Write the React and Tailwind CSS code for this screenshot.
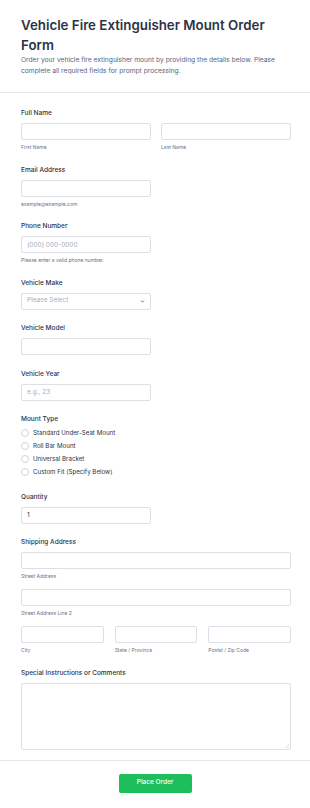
import React from "react";

const inputCls =
  "block h-[17px] w-full rounded-[2px] border border-[#dcdfe6] bg-white px-[5px] text-[6.5px] text-[#2c3345] placeholder:text-[#a6adbb] outline-none";

const Label = ({ children, className = "" }) => (
  <div className={`h-[10px] text-[6.5px] font-medium leading-[10px] text-[#2c3345] ${className}`}>
    {children}
  </div>
);

const Sub = ({ children }) => (
  <div className="mt-[3px] h-[8px] text-[5px] leading-[8px] text-[#6b7489]">{children}</div>
);

const Field = ({ label, sub, placeholder, value, narrow = true }) => (
  <div>
    <Label className="mb-[5px]">{label}</Label>
    <div className={narrow ? "w-[130px]" : "w-full"}>
      <input className={inputCls} placeholder={placeholder} defaultValue={value} />
    </div>
    {sub && <Sub>{sub}</Sub>}
  </div>
);

const Radio = ({ text }) => (
  <label className="flex h-[13px] items-center gap-[4px]">
    <span className="h-[8px] w-[8px] rounded-full border border-[#cfd3dc] bg-white" />
    <span className="text-[6.2px] text-[#2c3345]">{text}</span>
  </label>
);

export default function App() {
  return (
    <div className="min-h-[808px] w-[310px] bg-white font-['Inter',sans-serif]">
      <div className="border-b border-[#e6e7eb] pl-[21px] pr-[19px] pb-[15px] pt-[15px]">
        <h1 className="text-[13.3px] font-semibold leading-[20px] text-[#2c3345]">
          Vehicle Fire Extinguisher Mount Order Form
        </h1>
        <p className="text-[6.7px] leading-[11px] text-[#57647e]">
          Order your vehicle fire extinguisher mount by providing the details below. Please
          complete all required fields for prompt processing.
        </p>
      </div>

      <div className="flex flex-col gap-[13.5px] pl-[21px] pr-[19px] pt-[15px] pb-[10px]">
        <div>
          <Label className="mb-[5px]">Full Name</Label>
          <div className="grid grid-cols-2 gap-[10px]">
            <div>
              <input className={inputCls} />
              <Sub>First Name</Sub>
            </div>
            <div>
              <input className={inputCls} />
              <Sub>Last Name</Sub>
            </div>
          </div>
        </div>

        <Field label="Email Address" sub="example@example.com" />
        <Field
          label="Phone Number"
          sub="Please enter a valid phone number."
          placeholder="(000) 000-0000"
        />

        <div>
          <Label className="mb-[5px]">Vehicle Make</Label>
          <div className="flex h-[17px] w-[130px] items-center justify-between rounded-[2px] border border-[#dcdfe6] px-[5px]">
            <span className="text-[6.5px] text-[#a6adbb]">Please Select</span>
            <svg width="5" height="5" viewBox="0 0 24 24" fill="none" stroke="#3d4556" strokeWidth="3.5" strokeLinecap="round" strokeLinejoin="round">
              <path d="M6 9l6 6 6-6" />
            </svg>
          </div>
        </div>

        <Field label="Vehicle Model" />
        <Field label="Vehicle Year" placeholder="e.g., 23" />

        <div>
          <Label className="mb-[2px]">Mount Type</Label>
          <Radio text="Standard Under-Seat Mount" />
          <Radio text="Roll Bar Mount" />
          <Radio text="Universal Bracket" />
          <Radio text="Custom Fit (Specify Below)" />
        </div>

        <Field label="Quantity" value="1" />

        <div>
          <Label className="mb-[5px]">Shipping Address</Label>
          <input className={inputCls} />
          <Sub>Street Address</Sub>
          <div className="mt-[9px]">
            <input className={inputCls} />
            <Sub>Street Address Line 2</Sub>
          </div>
          <div className="mt-[9px] grid grid-cols-3 gap-[11px]">
            <div>
              <input className={inputCls} />
              <Sub>City</Sub>
            </div>
            <div>
              <input className={inputCls} />
              <Sub>State / Province</Sub>
            </div>
            <div>
              <input className={inputCls} />
              <Sub>Postal / Zip Code</Sub>
            </div>
          </div>
        </div>

        <div>
          <Label className="mb-[5px]">Special Instructions or Comments</Label>
          <div className="relative">
            <textarea className="block h-[67px] w-full resize-none rounded-[2px] border border-[#dcdfe6] bg-white outline-none" />
            <svg className="absolute bottom-[2px] right-[2px]" width="5" height="5" viewBox="0 0 5 5" stroke="#c4c8d0" strokeWidth="0.6">
              <path d="M1 5L5 1M3 5L5 3" />
            </svg>
          </div>
        </div>
      </div>

      <div className="flex justify-center border-t border-[#e6e7eb] pt-[13px] pb-[16px]">
        <button className="h-[19px] w-[73px] rounded-[2px] bg-[#1fbe5c] text-[6.5px] font-medium text-white">
          Place Order
        </button>
      </div>
    </div>
  );
}
